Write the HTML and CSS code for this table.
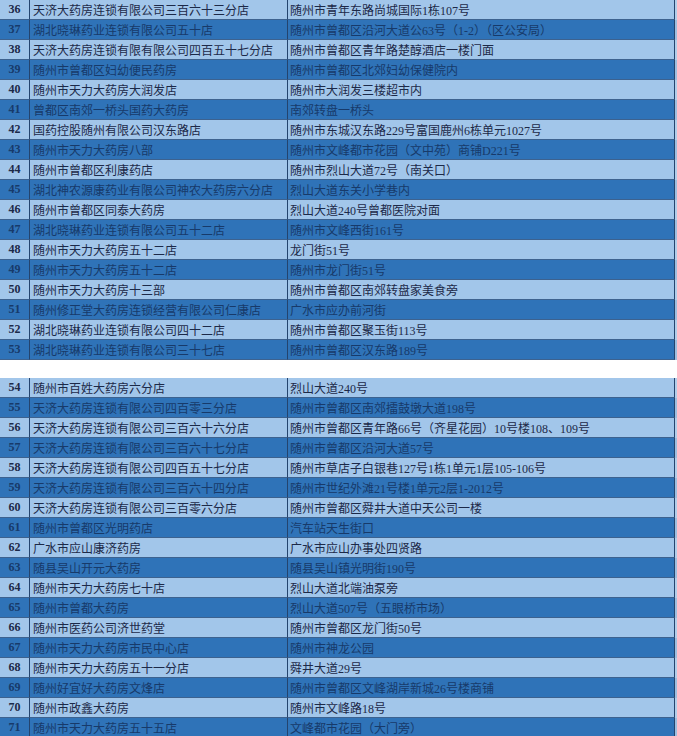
FILE: index.html
```html
<!DOCTYPE html>
<html lang="zh-CN">
<head>
<meta charset="utf-8">
<title>药店名单</title>
<link rel="stylesheet" href="styles.css">
</head>
<body>
<div class="tbl">
  <div class="row light"><div class="no">36</div><div class="name">天济大药房连锁有限公司三百六十三分店</div><div class="addr">随州市青年东路尚城国际1栋107号</div></div>
  <div class="row dark"><div class="no">37</div><div class="name">湖北晓琳药业连锁有限公司五十店</div><div class="addr">随州市曾都区沿河大道公63号（1-2）（区公安局）</div></div>
  <div class="row light"><div class="no">38</div><div class="name">天济大药房连锁有限有限公司四百五十七分店</div><div class="addr">随州市曾都区青年路楚醇酒店一楼门面</div></div>
  <div class="row dark"><div class="no">39</div><div class="name">随州市曾都区妇幼便民药房</div><div class="addr">随州市曾都区北郊妇幼保健院内</div></div>
  <div class="row light"><div class="no">40</div><div class="name">随州市天力大药房大润发店</div><div class="addr">随州市大润发三楼超市内</div></div>
  <div class="row dark"><div class="no">41</div><div class="name">曾都区南郊一桥头国药大药房</div><div class="addr">南郊转盘一桥头</div></div>
  <div class="row light"><div class="no">42</div><div class="name">国药控股随州有限公司汉东路店</div><div class="addr">随州市东城汉东路229号富国鹿州6栋单元1027号</div></div>
  <div class="row dark"><div class="no">43</div><div class="name">随州市天力大药房八部</div><div class="addr">随州市文峰都市花园（文中苑）商铺D221号</div></div>
  <div class="row light"><div class="no">44</div><div class="name">随州市曾都区利康药店</div><div class="addr">随州市烈山大道72号（南关口）</div></div>
  <div class="row dark"><div class="no">45</div><div class="name">湖北神农源康药业有限公司神农大药房六分店</div><div class="addr">烈山大道东关小学巷内</div></div>
  <div class="row light"><div class="no">46</div><div class="name">随州市曾都区同泰大药房</div><div class="addr">烈山大道240号曾都医院对面</div></div>
  <div class="row dark"><div class="no">47</div><div class="name">湖北晓琳药业连锁有限公司五十二店</div><div class="addr">随州市文峰西街161号</div></div>
  <div class="row light"><div class="no">48</div><div class="name">随州市天力大药房五十二店</div><div class="addr">龙门街51号</div></div>
  <div class="row dark"><div class="no">49</div><div class="name">随州市天力大药房五十二店</div><div class="addr">随州市龙门街51号</div></div>
  <div class="row light"><div class="no">50</div><div class="name">随州市天力大药房十三部</div><div class="addr">随州市曾都区南郊转盘家美食旁</div></div>
  <div class="row dark"><div class="no">51</div><div class="name">随州修正堂大药房连锁经营有限公司仁康店</div><div class="addr">广水市应办前河街</div></div>
  <div class="row light"><div class="no">52</div><div class="name">湖北晓琳药业连锁有限公司四十二店</div><div class="addr">随州市曾都区聚玉街113号</div></div>
  <div class="row dark"><div class="no">53</div><div class="name">湖北晓琳药业连锁有限公司三十七店</div><div class="addr">随州市曾都区汉东路189号</div></div>
</div>
<div class="tbl second">
  <div class="row light"><div class="no">54</div><div class="name">随州市百姓大药房六分店</div><div class="addr">烈山大道240号</div></div>
  <div class="row dark"><div class="no">55</div><div class="name">天济大药房连锁有限公司四百零三分店</div><div class="addr">随州市曾都区南郊擂鼓墩大道198号</div></div>
  <div class="row light"><div class="no">56</div><div class="name">天济大药房连锁有限公司三百六十六分店</div><div class="addr">随州市曾都区青年路66号（齐星花园）10号楼108、109号</div></div>
  <div class="row dark"><div class="no">57</div><div class="name">天济大药房连锁有限公司三百六十七分店</div><div class="addr">随州市曾都区沿河大道57号</div></div>
  <div class="row light"><div class="no">58</div><div class="name">天济大药房连锁有限公司四百五十七分店</div><div class="addr">随州市草店子白银巷127号1栋1单元1层105-106号</div></div>
  <div class="row dark"><div class="no">59</div><div class="name">天济大药房连锁有限公司三百六十四分店</div><div class="addr">随州市世纪外滩21号楼1单元2层1-2012号</div></div>
  <div class="row light"><div class="no">60</div><div class="name">天济大药房连锁有限公司三百零六分店</div><div class="addr">随州市曾都区舜井大道中天公司一楼</div></div>
  <div class="row dark"><div class="no">61</div><div class="name">随州市曾都区光明药店</div><div class="addr">汽车站天生街口</div></div>
  <div class="row light"><div class="no">62</div><div class="name">广水市应山康济药房</div><div class="addr">广水市应山办事处四贤路</div></div>
  <div class="row dark"><div class="no">63</div><div class="name">随县吴山开元大药房</div><div class="addr">随县吴山镇光明街190号</div></div>
  <div class="row light"><div class="no">64</div><div class="name">随州市天力大药房七十店</div><div class="addr">烈山大道北端油泵旁</div></div>
  <div class="row dark"><div class="no">65</div><div class="name">随州市曾都大药房</div><div class="addr">烈山大道507号（五眼桥市场）</div></div>
  <div class="row light"><div class="no">66</div><div class="name">随州市医药公司济世药堂</div><div class="addr">随州市曾都区龙门街50号</div></div>
  <div class="row dark"><div class="no">67</div><div class="name">随州市天力大药房市民中心店</div><div class="addr">随州市神龙公园</div></div>
  <div class="row light"><div class="no">68</div><div class="name">随州市天力大药房五十一分店</div><div class="addr">舜井大道29号</div></div>
  <div class="row dark"><div class="no">69</div><div class="name">随州好宜好大药房文烽店</div><div class="addr">随州市曾都区文峰湖岸新城26号楼商铺</div></div>
  <div class="row light"><div class="no">70</div><div class="name">随州市政鑫大药房</div><div class="addr">随州市文峰路18号</div></div>
  <div class="row dark"><div class="no">71</div><div class="name">随州市天力大药房五十五店</div><div class="addr">文峰都市花园（大门旁）</div></div>
</div>
</body>
</html>
```

FILE: styles.css
```css
html, body {
  margin: 0;
  padding: 0;
  background: #ffffff;
}
body {
  width: 677px;
  font-family: "Liberation Serif", "Noto Sans CJK SC", serif;
  font-size: 12px;
}
.tbl {
  display: flex;
  flex-direction: column;
}
.second {
  margin-top: 18px;
}
.row {
  display: flex;
  height: 20px;
}
.row > div {
  box-sizing: border-box;
  height: 20px;
  border-right: 1px solid #24446e;
  border-bottom: 1px solid #3d628f;
  display: flex;
  align-items: center;
  white-space: nowrap;
  overflow: hidden;
}
.light {
  background: linear-gradient(to right, #a2c6ea 675px, #b3cfea 675px);
  color: #1c2948;
}
.dark {
  background: linear-gradient(to right, #2f73b8 675px, #9fbfdf 675px);
  color: #173a6a;
}
.no {
  width: 30px;
  justify-content: center;
  font-weight: bold;
  font-size: 12px;
}
.name {
  width: 258px;
  padding-left: 3px;
}
.addr {
  width: 387px;
  padding-left: 2px;
}
```
